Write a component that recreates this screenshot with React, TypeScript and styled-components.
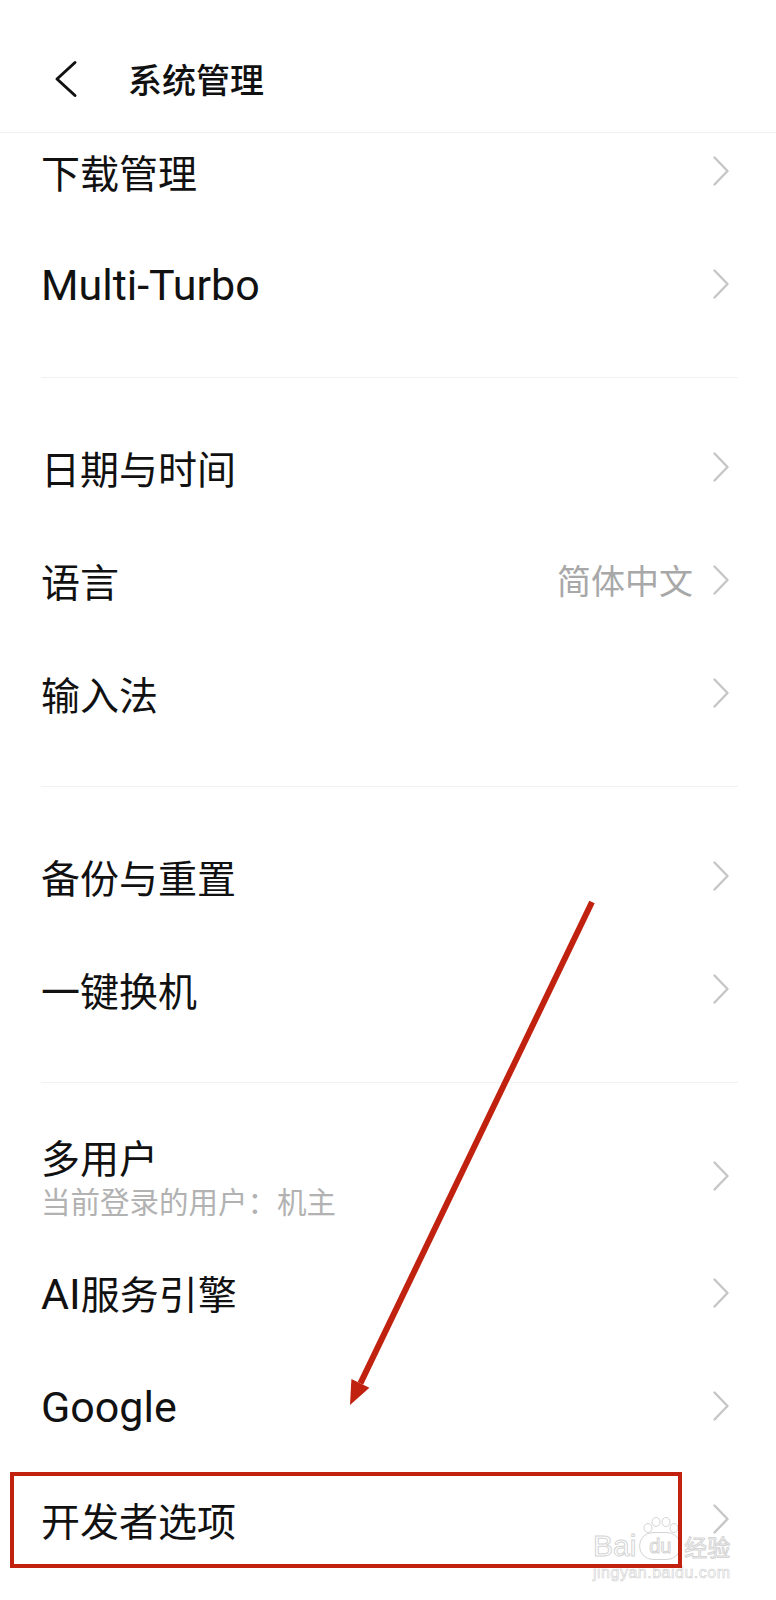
import React from "react";
import styled, { createGlobalStyle } from "styled-components";

const GlobalStyle = createGlobalStyle`
  html, body {
    margin: 0;
    padding: 0;
    background: #ffffff;
  }
  body {
    font-family: "Roboto", "Noto Sans CJK SC", sans-serif;
    color: #111111;
    -webkit-font-smoothing: antialiased;
  }
`;

const Screen = styled.div`
  position: relative;
  width: 776px;
  height: 1600px;
  overflow: hidden;
  background: #ffffff;
`;

const Header = styled.header`
  height: 106px;
  padding-top: 26px;
  display: flex;
  align-items: center;
  padding-left: 53px;
  border-bottom: 1px solid #f1f1f1;
  box-sizing: content-box;
`;

const BackIcon = styled.svg`
  width: 26px;
  height: 38px;
  flex: none;
`;

const Title = styled.h1`
  margin: 0 0 0 49px;
  font-family: "Noto Sans CJK SC", sans-serif;
  font-size: 34px;
  font-weight: 500;
  line-height: 40px;
  color: #111111;
`;

const Viewport = styled.div`
  overflow: hidden;
`;

const List = styled.div`
  margin-top: -19px;
  display: flex;
  flex-direction: column;
`;

const Row = styled.div<{ $tall?: boolean }>`
  height: ${(p) => (p.$tall ? 121 : 113)}px;
  display: flex;
  align-items: center;
  justify-content: space-between;
  padding: 0 46px 0 41px;
`;

const TextBlock = styled.div`
  display: flex;
  flex-direction: column;
`;

const Label = styled.div`
  font-family: "Noto Sans CJK SC", sans-serif;
  font-size: 39px;
  line-height: 44px;
  color: #111111;
  white-space: nowrap;
`;

const Latin = styled.span`
  font-family: "Roboto", sans-serif;
  font-size: 43px;
`;

const Subtitle = styled.div`
  margin-top: 4px;
  font-family: "Noto Sans CJK SC", sans-serif;
  font-size: 29.5px;
  line-height: 36px;
  color: #b2b2b2;
  white-space: nowrap;
`;

const Trailing = styled.div`
  display: flex;
  align-items: center;
  gap: 19px;
`;

const Value = styled.span`
  font-family: "Noto Sans CJK SC", sans-serif;
  font-size: 34px;
  line-height: 40px;
  color: #a8a8a8;
`;

const ChevronIcon = styled.svg`
  width: 18px;
  height: 30px;
  flex: none;
`;

const Separator = styled.div`
  height: 70px;
  padding: 37px 38px 0 41px;
  box-sizing: border-box;
`;

const SeparatorLine = styled.div`
  height: 1px;
  background: #f1f1f1;
`;

const Overlay = styled.svg`
  position: absolute;
  left: 0;
  top: 0;
  width: 776px;
  height: 1600px;
  pointer-events: none;
`;

const Watermark = styled.div`
  position: absolute;
  left: 593px;
  top: 1531px;
  display: flex;
  flex-direction: column;
  align-items: flex-start;
  pointer-events: none;
`;

const WatermarkLogo = styled.div`
  display: flex;
  align-items: center;
  font-family: "Liberation Sans", sans-serif;
  font-size: 30px;
  line-height: 30px;
  color: rgba(255, 255, 255, 0.9);
  -webkit-text-stroke: 1px #d4d4d4;
  white-space: nowrap;
`;

const WatermarkCJK = styled.span`
  font-family: "Noto Sans CJK SC", sans-serif;
  font-size: 23px;
  margin-left: 1px;
`;

const WatermarkPaw = styled.span`
  position: relative;
  display: inline-flex;
  align-items: center;
  justify-content: center;
  width: 40px;
  height: 26px;
  font-size: 20px;
  border: 1px solid #d4d4d4;
  border-radius: 14px;
  margin: 0 2px 0 3px;
  line-height: 24px;
`;

const PawToes = styled.svg`
  position: absolute;
  left: 1px;
  top: -16px;
  width: 40px;
  height: 16px;
`;

const WatermarkUrl = styled.div`
  margin-top: 5px;
  font-family: "Liberation Sans", sans-serif;
  font-size: 16px;
  line-height: 14px;
  color: rgba(255, 255, 255, 0.9);
  -webkit-text-stroke: 0.6px #d0d0d0;
  letter-spacing: 0.5px;
  white-space: nowrap;
`;

function Chevron() {
  return (
    <ChevronIcon viewBox="0 0 18 30">
      <path
        d="M2.5 1.5 L15.5 15 L2.5 28.5"
        fill="none"
        stroke="#c6c6c6"
        strokeWidth="2.4"
        strokeLinecap="round"
        strokeLinejoin="round"
      />
    </ChevronIcon>
  );
}

function MixedText({ text }: { text: string }) {
  const parts = text.split(/([A-Za-z][A-Za-z\-]*)/).filter((p) => p.length > 0);
  return (
    <>
      {parts.map((p, i) =>
        /^[A-Za-z]/.test(p) ? <Latin key={i}>{p}</Latin> : <React.Fragment key={i}>{p}</React.Fragment>
      )}
    </>
  );
}

type Item =
  | { kind: "row"; label: string; value?: string; sub?: string }
  | { kind: "sep" };

const items: Item[] = [
  { kind: "row", label: "下载管理" },
  { kind: "row", label: "Multi-Turbo" },
  { kind: "sep" },
  { kind: "row", label: "日期与时间" },
  { kind: "row", label: "语言", value: "简体中文" },
  { kind: "row", label: "输入法" },
  { kind: "sep" },
  { kind: "row", label: "备份与重置" },
  { kind: "row", label: "一键换机" },
  { kind: "sep" },
  { kind: "row", label: "多用户", sub: "当前登录的用户：机主" },
  { kind: "row", label: "AI服务引擎" },
  { kind: "row", label: "Google" },
  { kind: "row", label: "开发者选项" },
];

export default function App() {
  return (
    <>
      <GlobalStyle />
      <Screen>
        <Header>
          <BackIcon viewBox="0 0 26 38">
            <path
              d="M22 2.5 L4 19 L22 35.5"
              fill="none"
              stroke="#111111"
              strokeWidth="3"
              strokeLinecap="round"
              strokeLinejoin="round"
            />
          </BackIcon>
          <Title>系统管理</Title>
        </Header>
        <Viewport>
          <List>
            {items.map((item, i) =>
              item.kind === "sep" ? (
                <Separator key={i}>
                  <SeparatorLine />
                </Separator>
              ) : (
                <Row key={i} $tall={!!item.sub}>
                  <TextBlock>
                    <Label>
                      <MixedText text={item.label} />
                    </Label>
                    {item.sub && <Subtitle>{item.sub}</Subtitle>}
                  </TextBlock>
                  <Trailing>
                    {item.value && <Value>{item.value}</Value>}
                    <Chevron />
                  </Trailing>
                </Row>
              )
            )}
          </List>
        </Viewport>
        <Watermark>
          <WatermarkLogo>
            Bai
            <WatermarkPaw>
              <PawToes viewBox="0 0 40 16">
                <g fill="none" stroke="#d4d4d4" strokeWidth="1">
                  <ellipse cx="7" cy="11" rx="4" ry="4.5" />
                  <ellipse cx="15" cy="5" rx="4" ry="4.5" />
                  <ellipse cx="25" cy="5" rx="4" ry="4.5" />
                  <ellipse cx="33" cy="11" rx="4" ry="4.5" />
                </g>
              </PawToes>
              du
            </WatermarkPaw>
            <WatermarkCJK>经验</WatermarkCJK>
          </WatermarkLogo>
          <WatermarkUrl>jingyan.baidu.com</WatermarkUrl>
        </Watermark>
        <Overlay viewBox="0 0 776 1600">
          <rect x="12" y="1474" width="668" height="92" fill="none" stroke="#c0220f" strokeWidth="4" />
          <line x1="592" y1="902" x2="360.4" y2="1383.4" stroke="#c0220f" strokeWidth="6" />
          <polygon points="350,1405 369.4,1387.7 351.4,1379.1" fill="#c0220f" />
        </Overlay>
      </Screen>
    </>
  );
}
